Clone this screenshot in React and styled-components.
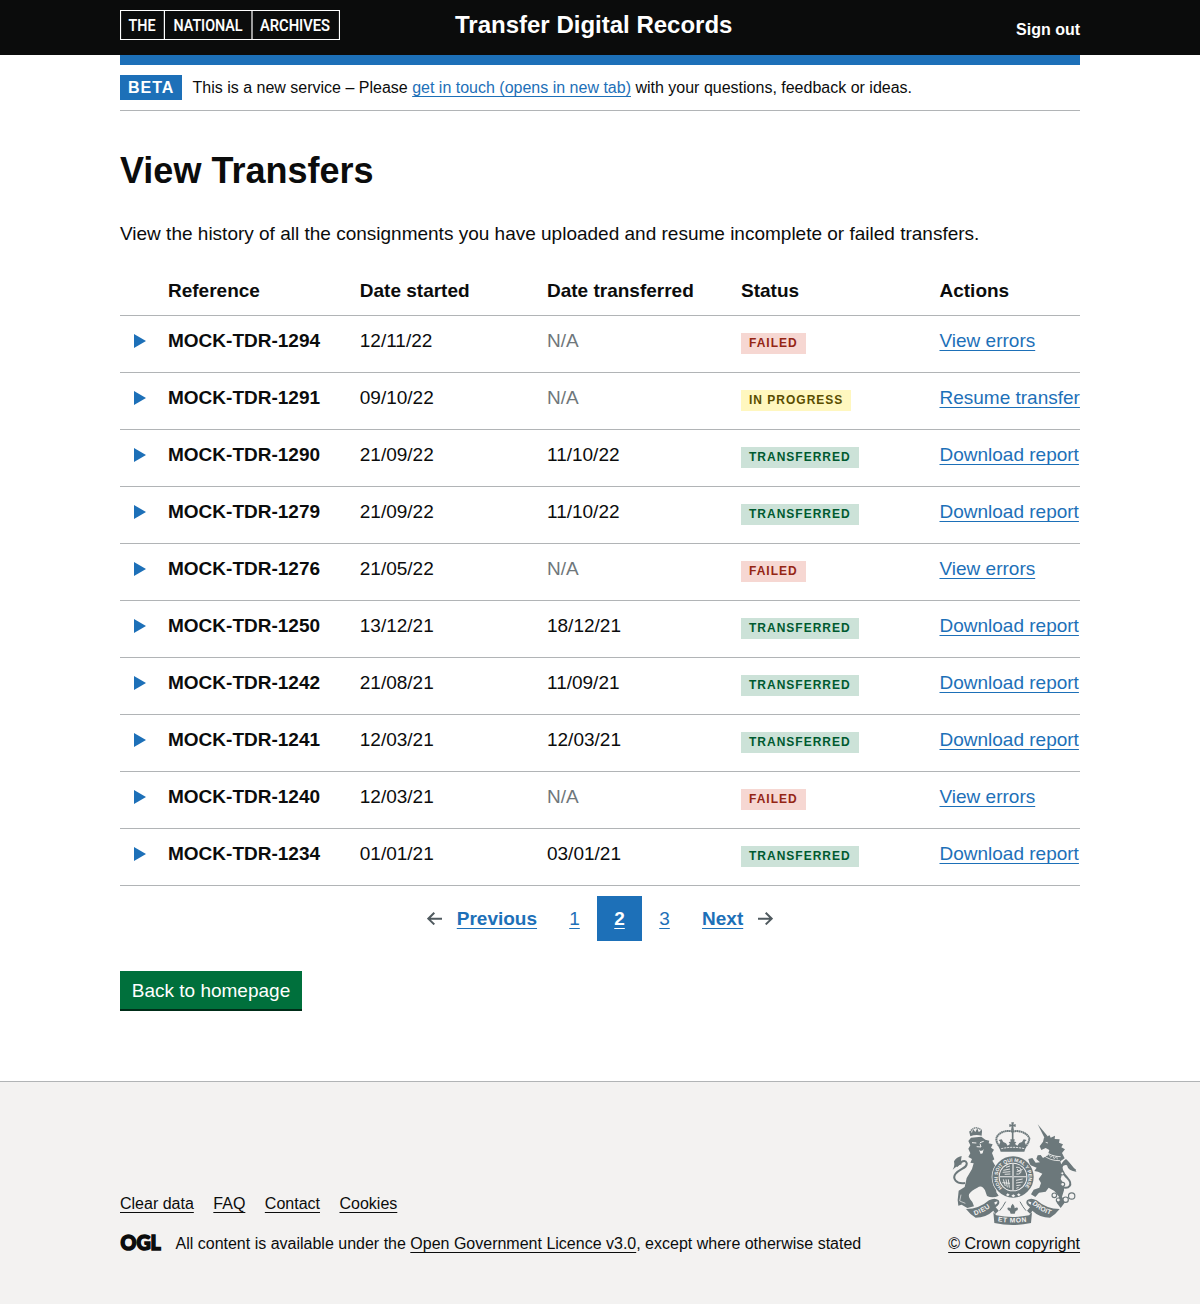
import React from "react";
import styled, { createGlobalStyle, css } from "styled-components";

const BLUE = "#1d70b8";
const INK = "#0b0c0c";
const RULE = "#b1b4b6";
const STONE = "#6c787b";
const PAPER = "#f3f2f1";

const GlobalStyle = createGlobalStyle`
  *, *::before, *::after { box-sizing: border-box; }
  body {
    margin: 0;
    background: #fff;
    color: ${INK};
    font-family: "Liberation Sans", Arial, Helvetica, sans-serif;
    font-size: 19px;
    line-height: 25px;
  }
`;

const Page = styled.div`
  display: flex;
  flex-direction: column;
  min-height: 1304px;
`;

const Container = styled.div`
  width: 960px;
  margin: 0 auto;
`;

const Content = styled(Container)`
  flex: 1;
`;

const Header = styled.header`
  height: 55px;
  background: ${INK};
  color: #fff;
`;

const HeaderInner = styled(Container)`
  display: grid;
  grid-template-columns: 335px 1fr auto;
  padding-top: 10px;
`;

const LogoLink = styled.a`
  display: block;
  height: 30px;
  svg { display: block; }
`;

const ServiceName = styled.span`
  font-size: 24px;
  line-height: 30px;
  font-weight: 700;
`;

const SignOut = styled.a`
  padding-top: 10px;
  font-size: 16px;
  line-height: 20px;
  font-weight: 700;
`;

const BlueBar = styled.div`
  height: 10px;
  background: ${BLUE};
`;

const PhaseBanner = styled.div`
  display: flex;
  align-items: center;
  height: 46px;
  border-bottom: 1px solid ${RULE};
  font-size: 16px;
  line-height: 20px;
`;

const PhaseTag = styled.strong`
  height: 25px;
  width: 62px;
  padding-left: 8px;
  margin-right: 10.5px;
  background: ${BLUE};
  color: #fff;
  letter-spacing: 1px;
  line-height: 25px;
`;

const Link = styled.a`
  color: ${({ $ink }) => ($ink ? INK : BLUE)};
  font-weight: ${({ $bold }) => ($bold ? 700 : 400)};
  text-decoration: underline;
  text-decoration-thickness: 1px;
  text-underline-offset: 0.1578em;
  text-decoration-skip-ink: none;
  white-space: nowrap;
`;

const Main = styled.main`
  padding-top: 40px;
`;

const Title = styled.h1`
  margin: 0 0 30px;
  font-size: 36px;
  line-height: 40px;
  font-weight: 700;
`;

const Lead = styled.p`
  margin: 0 0 20px;
`;

const Table = styled.table`
  width: 100%;
  table-layout: fixed;
  border-spacing: 0;
  border-collapse: separate;
`;

const Col = styled.col`
  width: ${({ $w }) => $w}px;
`;

const cell = css`
  padding: 12px 0 0;
  text-align: left;
  vertical-align: top;
  border-bottom: 1px solid ${RULE};
  white-space: nowrap;
`;

const HeadCell = styled.th`
  ${cell}
  height: 50px;
  font-weight: 700;
`;

const Cell = styled.td`
  ${cell}
  height: 57px;
  color: ${({ $muted }) => ($muted ? "#6f777b" : INK)};
`;

const RefCell = styled.th`
  ${cell}
  height: 57px;
  font-weight: 700;
`;

const Expander = styled.span`
  display: block;
  width: 0;
  margin: 6px 0 0 14px;
  border-style: solid;
  border-color: transparent transparent transparent ${BLUE};
  border-width: 7px 0 7px 12.1px;
`;

const tones = {
  FAILED: ["#f6d7d2", "#942514"],
  "IN PROGRESS": ["#fff7bf", "#594d00"],
  TRANSFERRED: ["#cce2d8", "#005a30"],
};

const StatusTag = styled.strong`
  display: block;
  width: max-content;
  height: 21px;
  margin-top: 5px;
  padding: 0 8px;
  background: ${({ $tone }) => tones[$tone][0]};
  color: ${({ $tone }) => tones[$tone][1]};
  font-size: 12px;
  line-height: 20px;
  letter-spacing: 1px;
`;

const Pagination = styled.nav`
  display: flex;
  align-items: center;
  justify-content: center;
  height: 45px;
  margin-top: 10px;
`;

const PageStep = styled.span`
  display: flex;
  align-items: center;
  gap: 15px;
  padding: 0 15px;
`;

const PageNumber = styled.span`
  width: 45px;
  line-height: 45px;
  text-align: center;
  background: ${({ $current }) => ($current ? BLUE : "transparent")};
  a {
    color: ${({ $current }) => ($current ? "#fff" : BLUE)};
    font-weight: ${({ $current }) => ($current ? 700 : 400)};
  }
`;

const Button = styled.a`
  display: block;
  width: 182px;
  height: 38px;
  margin-top: 30px;
  background: #00703c;
  box-shadow: 0 2px 0 #002d18;
  color: #fff;
  line-height: 39px;
  text-align: center;
`;

const Footer = styled.footer`
  height: 223px;
  padding-top: 40px;
  border-top: 1px solid ${RULE};
  background: ${PAPER};
  font-size: 16px;
  line-height: 20px;
`;

const FooterInner = styled(Container)`
  display: flex;
  justify-content: space-between;
  align-items: flex-end;
  height: 132px;
`;

const FooterLinks = styled.div`
  display: flex;
  gap: 19.5px;
  margin-bottom: 20px;
`;

const Licence = styled.div`
  display: flex;
  align-items: center;
  svg { margin: -3px 11.5px -3px 0; }
`;

const Crown = styled.div`
  display: flex;
  flex-direction: column;
  align-items: center;
  justify-content: space-between;
  height: 132px;
  svg { margin-left: 2px; }
`;

const ArchivesLogo = () => (
  <svg width="220" height="30" viewBox="0 0 220 30" fill="none" stroke="#fff">
    <path d="M.5.5h219v29H.5zM44.4 0v30M132 0v30" strokeWidth="1.2" />
    <g fill="#fff" strokeWidth="0.12" fontFamily="Roboto, sans-serif" fontSize="17" fontWeight="500">
      <text x="8.5" y="21.3" textLength="27" lengthAdjust="spacingAndGlyphs">THE</text>
      <text x="53.5" y="21.3" textLength="69" lengthAdjust="spacingAndGlyphs">NATIONAL</text>
      <text x="140" y="21.3" textLength="70" lengthAdjust="spacingAndGlyphs">ARCHIVES</text>
    </g>
  </svg>
);

const OglLogo = () => (
  <svg width="44" height="26" viewBox="0 -3 44 26">
    <text
      x="0.5"
      y="16"
      fill={INK}
      stroke={INK}
      strokeWidth="1.5"
      fontFamily="Lato, sans-serif"
      fontWeight="900"
      fontSize="20.5"
      textLength="40.3"
      lengthAdjust="spacingAndGlyphs"
    >
      OGL
    </text>
  </svg>
);

const Arrow = ({ flip }) => (
  <svg width="15" height="13" viewBox="0 0 15 13" fill="#505a5f">
    <path
      transform={flip ? "translate(15 0) scale(-1 1)" : undefined}
      d="m6.5938-0.0078125-6.7266 6.7266 6.7441 6.4062 1.377-1.449-4.1856-3.9768h12.896v-2h-12.984l4.2931-4.293-1.414-1.414z"
    />
  </svg>
);

const Crest = () => (
  <svg width="126" height="103" viewBox="36 35 378 309" fill={STONE}>
    <defs>
      <path id="garter" d="M187 233A46 46 0 1 1 251 233" />
      <path id="dieu" d="M104 315Q140 304 168 276" />
      <path id="mon" d="M173 333Q218 341 272 332" />
      <path id="droit" d="M276 281Q300 305 344 317" />
    </defs>

    {/* lion */}
    <path d="M91 78 87 62 96 67 99 56 106 65 112 54 116 65 126 60 125 76Q107 71 91 78Z" />
    <path d="M92 66V62Q97 54 107 52Q120 54 124 60V68" fill="none" stroke={STONE} strokeWidth="4" strokeDasharray="4 1.5" />
    <path d="M93 82 124 79 136 88 148 91 146 99 158 102 153 112 162 118 156 128 163 147 157 151 168 170 159 182 166 199 161 209 168 220 169 246 176 256Q158 265 141 257L135 240Q126 222 112 232Q94 240 87 252Q84 262 97 275L102 288 82 293 65 283 55 286 53 269 56 241 74 230 80 203 96 176 101 159 91 157 96 146 85 140 91 129 85 115 91 105 85 92Z" />
    <path d="M75 218C48 222 36 204 47 190C61 174 83 173 80 158C77 148 62 151 50 168" fill="none" stroke={STONE} strokeWidth="6" />
    <path d="M38 178Q45 168 42 153Q50 140 65 137Q61 151 65 162Q54 165 38 178Z" />
    <path d="m96 97 13 1m11-1 11-4m-21 16 13 1-3-10" fill="none" stroke={PAPER} strokeWidth="3" />
    <path d="M117 118q8 8 14-2l-3 13-6 2Z" fill={PAPER} />
    <path d="m63 253-4 19 17 7" fill="none" stroke={PAPER} strokeWidth="2" />

    {/* unicorn */}
    <path d="m293 42 30 36-9 6Z" />
    <path d="M312 82 329 75 332 82 345 76 344 86 359 87 357 97 369 102 364 111 375 117 366 128 374 144 361 153 369 181 362 206 372 222 372 240 366 259 375 276 362 293 350 277 357 259 343 242 326 232 317 244 297 247 286 260 273 252 281 238 298 232 303 218 296 206 307 190 294 184 283 182 290 172 270 164 265 146 277 143 287 157 300 156 289 146 293 135 302 134 309 143 323 135 328 119 317 113 304 119 299 108 309 94Z" />
    <path d="M363 229C389 240 399 221 383 204C365 187 356 164 375 156C389 151 391 173 407 181" fill="none" stroke={STONE} strokeWidth="6" />
    <path d="M366 172Q362 155 378 146Q392 158 394 169L410 184Q384 182 381 165Q370 162 366 172Z" />
    <path d="M308 133Q330 152 360 151M314 121Q333 139 362 139" fill="none" stroke={PAPER} strokeWidth="2.5" />
    <path d="m316 127 5 8 6-4 5 10 6-6 4 10 8-7 2 9" fill="none" stroke={PAPER} strokeWidth="2" />
    <path d="M317 96l7 2" fill="none" stroke={PAPER} strokeWidth="2.5" />
    <g fill={PAPER} stroke={STONE} strokeWidth="3.5">
      <circle cx="343" cy="255" r="7" />
      <circle cx="355" cy="269" r="6" />
      <circle cx="377" cy="268" r="8" />
      <circle cx="395" cy="257" r="9.5" />
      <circle cx="367" cy="189" r="5" />
      <circle cx="368" cy="222" r="6" />
    </g>

    {/* crown */}
    <path d="M214 36 222 36 220 43 227 41v9l-7-2 2 13h-9l2-13-7 2v-9l7 2Z" />
    <path d="M218 64C197 56 170 70 169 86Q169 98 181 112H254Q267 97 268 85C265 70 237 57 218 64Z" fill={PAPER} stroke={STONE} strokeWidth="6" strokeDasharray="5 1" />
    <path d="M218 61V99" fill="none" stroke={STONE} strokeWidth="5" />
    <path d="m176 107 5-12-5-6 9-2 5 8 8 4 5 7 7-5-4-6 6-1-1-7h13l-1 7 6 1-4 6 7 5 6-8 8-3 5-8 9 2-6 6 5 12-6 17H182Z" />
    <path d="M184 115q34-8 69 0" fill="none" stroke={PAPER} strokeWidth="3" strokeDasharray="6 3" />

    {/* garter and quartered arms */}
    <circle cx="219" cy="200" r="64" fill={PAPER} />
    <circle cx="219" cy="200" r="52.5" fill="none" stroke={STONE} strokeWidth="19" />
    <text fill={PAPER} fontFamily="Liberation Sans, sans-serif" fontSize="15" fontWeight="700">
      <textPath href="#garter">HONI SOIT QUI MAL Y PENSE</textPath>
    </text>
    <circle cx="219" cy="200" r="40" />
    <path d="M219 160v80M179 199h80" stroke={PAPER} strokeWidth="4" />
    <path d="M219 160v80M179 199h80" stroke={STONE} strokeWidth="1" />
    <path d="m190 180 20-4m-22 10 23-2m-17 8 17-1M198 171l12-4M228 171q15-2 15 10t-14 10m2-15 9 11m-10-3 18-7M190 207l6 20m2-20 4 24m3-24 3 25m-21-15 23 2M228 210l20-4m-20 12 20-3m-19 11 13-2M229 234l7-3" fill="none" stroke={PAPER} strokeWidth="2.6" />
    <path d="m203 249 6 4-5 5-6-4zm17 3 6 4-6 5-6-5zm16-3 6 4-6 5-5-5z" fill={PAPER} />

    {/* motto ribbon */}
    <path d="M78 296Q118 296 147 270Q165 261 176 270Q183 281 167 291L176 301 166 311 160 301Q138 322 107 322Q90 312 78 296Z" />
    <path d="M359 296Q319 296 290 270Q272 261 261 270Q254 281 270 291L261 301 271 311 277 301Q299 322 330 322Q347 312 359 296Z" />
    <path d="m163 276 9-3q2 6-7 10M274 276l-9-3q-2 6 7 10" fill={PAPER} />
    <path d="M160 306 169 315Q218 325 267 315L276 306 273 338Q218 350 163 338Z" />
    <g fill={PAPER} fontFamily="Liberation Sans, sans-serif" fontSize="20" fontWeight="700">
      <text letterSpacing="1.6"><textPath href="#dieu">DIEU</textPath></text>
      <text letterSpacing="1.8"><textPath href="#mon">ET MON</textPath></text>
      <text letterSpacing="0.5"><textPath href="#droit">DROIT</textPath></text>
    </g>
    <path d="M218 280q10 11 3 20 2-11 12-8 3 8-6 10l-3 8h-12l-3-8q-9-3-6-10 10-3 12 8-7-9 3-20Z" />
    <path d="M197 274Q188 291 179 301M240 274Q249 291 258 301" fill="none" stroke={STONE} strokeWidth="3" />
  </svg>
);

const transfers = [
  ["MOCK-TDR-1294", "12/11/22", "N/A", "FAILED"],
  ["MOCK-TDR-1291", "09/10/22", "N/A", "IN PROGRESS"],
  ["MOCK-TDR-1290", "21/09/22", "11/10/22", "TRANSFERRED"],
  ["MOCK-TDR-1279", "21/09/22", "11/10/22", "TRANSFERRED"],
  ["MOCK-TDR-1276", "21/05/22", "N/A", "FAILED"],
  ["MOCK-TDR-1250", "13/12/21", "18/12/21", "TRANSFERRED"],
  ["MOCK-TDR-1242", "21/08/21", "11/09/21", "TRANSFERRED"],
  ["MOCK-TDR-1241", "12/03/21", "12/03/21", "TRANSFERRED"],
  ["MOCK-TDR-1240", "12/03/21", "N/A", "FAILED"],
  ["MOCK-TDR-1234", "01/01/21", "03/01/21", "TRANSFERRED"],
];

const actions = {
  FAILED: "View errors",
  "IN PROGRESS": "Resume transfer",
  TRANSFERRED: "Download report",
};

export default function App() {
  return (
    <Page>
      <GlobalStyle />
      <Header>
        <HeaderInner>
          <LogoLink><ArchivesLogo /></LogoLink>
          <ServiceName>Transfer Digital Records</ServiceName>
          <SignOut>Sign out</SignOut>
        </HeaderInner>
      </Header>
      <Content>
        <BlueBar />
        <PhaseBanner>
          <PhaseTag>BETA</PhaseTag>
          <span>
            This is a new service – Please <Link>get in touch (opens in new tab)</Link> with your questions, feedback or ideas.
          </span>
        </PhaseBanner>
        <Main>
          <Title>View Transfers</Title>
          <Lead>View the history of all the consignments you have uploaded and resume incomplete or failed transfers.</Lead>
          <Table>
            <colgroup>
              {[48, 191.8, 187.2, 194, 198.5, 140.5].map((w, i) => <Col key={i} $w={w} />)}
            </colgroup>
            <thead>
              <tr>
                <HeadCell />
                {["Reference", "Date started", "Date transferred", "Status", "Actions"].map((h) => (
                  <HeadCell key={h}>{h}</HeadCell>
                ))}
              </tr>
            </thead>
            <tbody>
              {transfers.map(([reference, started, transferred, status]) => (
                <tr key={reference}>
                  <Cell><Expander /></Cell>
                  <RefCell>{reference}</RefCell>
                  <Cell>{started}</Cell>
                  <Cell $muted={transferred === "N/A"}>{transferred}</Cell>
                  <Cell><StatusTag $tone={status}>{status}</StatusTag></Cell>
                  <Cell><Link>{actions[status]}</Link></Cell>
                </tr>
              ))}
            </tbody>
          </Table>
          <Pagination>
            <PageStep><Arrow /><Link $bold>Previous</Link></PageStep>
            <PageNumber><Link>1</Link></PageNumber>
            <PageNumber $current><Link>2</Link></PageNumber>
            <PageNumber><Link>3</Link></PageNumber>
            <PageStep><Link $bold>Next</Link><Arrow flip /></PageStep>
          </Pagination>
          <Button>Back to homepage</Button>
        </Main>
      </Content>
      <Footer>
        <FooterInner>
          <div>
            <FooterLinks>
              {["Clear data", "FAQ", "Contact", "Cookies"].map((l) => <Link $ink key={l}>{l}</Link>)}
            </FooterLinks>
            <Licence>
              <OglLogo />
              <span>
                All content is available under the <Link $ink>Open Government Licence v3.0</Link>, except where otherwise stated
              </span>
            </Licence>
          </div>
          <Crown>
            <Crest />
            <Link $ink>© Crown copyright</Link>
          </Crown>
        </FooterInner>
      </Footer>
    </Page>
  );
}
